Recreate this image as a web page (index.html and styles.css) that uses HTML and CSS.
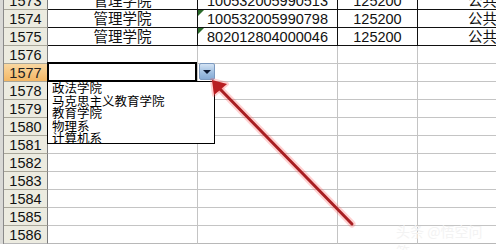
FILE: index.html
```html
<!DOCTYPE html>
<html>
<head>
<meta charset="utf-8">
<link rel="stylesheet" href="styles.css">
</head>
<body>
<div class="page">
  <div class="sheet">
    <div class="row data"><div class="edge"></div><div class="hdr">1573</div><div class="cell">管理学院</div><div class="cell flag">100532005990513</div><div class="cell">125200</div><div class="cell e">公共管理</div></div>
    <div class="row data"><div class="edge"></div><div class="hdr">1574</div><div class="cell">管理学院</div><div class="cell flag">100532005990798</div><div class="cell">125200</div><div class="cell e">公共管理</div></div>
    <div class="row data"><div class="edge"></div><div class="hdr">1575</div><div class="cell">管理学院</div><div class="cell flag">802012804000046</div><div class="cell">125200</div><div class="cell e">公共管理</div></div>
    <div class="row"><div class="edge"></div><div class="hdr">1576</div><div class="cell"></div><div class="cell"></div><div class="cell"></div><div class="cell e"></div></div>
    <div class="row"><div class="edge"></div><div class="hdr active">1577</div>
      <div class="cell current">
        <div class="dd-btn"><span class="tri"></span></div>
        <div class="dd-list">
          <div class="dd-item">政法学院</div>
          <div class="dd-item">马克思主义教育学院</div>
          <div class="dd-item">教育学院</div>
          <div class="dd-item">物理系</div>
          <div class="dd-item">计算机系</div>
        </div>
      </div>
      <div class="cell"></div><div class="cell"></div><div class="cell e"></div></div>
    <div class="row"><div class="edge"></div><div class="hdr">1578</div><div class="cell"></div><div class="cell"></div><div class="cell"></div><div class="cell e"></div></div>
    <div class="row"><div class="edge"></div><div class="hdr">1579</div><div class="cell"></div><div class="cell"></div><div class="cell"></div><div class="cell e"></div></div>
    <div class="row"><div class="edge"></div><div class="hdr">1580</div><div class="cell"></div><div class="cell"></div><div class="cell"></div><div class="cell e"></div></div>
    <div class="row"><div class="edge"></div><div class="hdr">1581</div><div class="cell"></div><div class="cell"></div><div class="cell"></div><div class="cell e"></div></div>
    <div class="row"><div class="edge"></div><div class="hdr">1582</div><div class="cell"></div><div class="cell"></div><div class="cell"></div><div class="cell e"></div></div>
    <div class="row"><div class="edge"></div><div class="hdr">1583</div><div class="cell"></div><div class="cell"></div><div class="cell"></div><div class="cell e"></div></div>
    <div class="row"><div class="edge"></div><div class="hdr">1584</div><div class="cell"></div><div class="cell"></div><div class="cell"></div><div class="cell e"></div></div>
    <div class="row"><div class="edge"></div><div class="hdr">1585</div><div class="cell"></div><div class="cell"></div><div class="cell"></div><div class="cell e"></div></div>
    <div class="row"><div class="edge"></div><div class="hdr">1586</div><div class="cell"></div><div class="cell"></div><div class="cell"></div><div class="cell e"></div></div>
  </div>
  <svg class="arrow" width="496" height="250" viewBox="0 0 496 250">
    <line x1="352" y1="224" x2="220" y2="89" stroke="rgba(255,90,90,0.28)" stroke-width="7" stroke-linecap="round"/>
    <polygon points="212,80 214,95 227,84" fill="rgba(255,90,90,0.28)" stroke="rgba(255,90,90,0.28)" stroke-width="4" stroke-linejoin="round"/>
    <line x1="352" y1="224" x2="220" y2="89" stroke="#a81f22" stroke-width="3" stroke-linecap="round"/>
    <polygon points="212,80 214,95 227,84" fill="#b81e22"/>
  </svg>
  <div class="watermark">头条 @悟空问答</div>
</div>
</body>
</html>
```
FILE: styles.css
```css
html, body {
  margin: 0;
  padding: 0;
  background: #ffffff;
}
.page {
  position: relative;
  width: 496px;
  height: 250px;
  overflow: hidden;
  background: #ffffff;
}
.sheet {
  display: flex;
  flex-direction: column;
  margin-top: -8px;
  font-family: "Liberation Sans", "Noto Sans CJK SC", sans-serif;
  font-size: 14.5px;
  color: #111;
}
.row {
  display: grid;
  grid-template-columns: 4px 44px 150px 140px 80px 1fr;
  height: 18px;
}
.row > div {
  box-sizing: border-box;
  height: 18px;
  line-height: 17px;
  white-space: nowrap;
  overflow: visible;
}
.edge {
  background: #d9d9d6;
  border-right: 1px solid #8a8a8a;
}
.hdr {
  background: #ecebe0;
  border-right: 1px solid #7c7c7c;
  border-bottom: 1px solid #a9a79a;
  text-align: center;
  padding-top: 1px;
  color: #111;
}
.hdr.active {
  background: linear-gradient(#f9d7a0, #f3b765);
  color: #222;
}
.cell {
  border-right: 1px solid #c4c4c4;
  border-bottom: 1px solid #c4c4c4;
  text-align: center;
  padding-top: 1px;
  position: relative;
}
.row:last-child .cell,
.row:last-child .hdr {
  border-bottom-color: #b8b8b8;
}
.data .cell {
  border-right-color: #111;
  border-bottom-color: #111;
}
.cell.e {
  text-align: left;
  padding-left: 50px;
  overflow: hidden;
  border-right: none;
}
.flag::before {
  content: "";
  position: absolute;
  left: 0;
  top: 0;
  width: 0;
  height: 0;
  border-top: 6px solid #2b6a2b;
  border-right: 6px solid transparent;
}
.current::after {
  content: "";
  position: absolute;
  left: -1px;
  top: -2px;
  right: 0;
  bottom: -1px;
  border: 2px solid #000;
  box-sizing: border-box;
}
.dd-btn {
  position: absolute;
  left: 151px;
  top: -1px;
  width: 16px;
  height: 17px;
  box-sizing: border-box;
  border: 1px solid #7c9ac0;
  border-radius: 2px;
  background: linear-gradient(#d3e3f4, #9dbde0 60%, #86aad4);
  display: flex;
  align-items: center;
  justify-content: center;
  z-index: 2;
}
.tri {
  width: 0;
  height: 0;
  border-left: 4px solid transparent;
  border-right: 4px solid transparent;
  border-top: 4px solid #0b1730;
  margin-top: 1px;
}
.dd-list {
  position: absolute;
  left: -1px;
  top: 17px;
  width: 168px;
  height: 63px;
  box-sizing: border-box;
  border: 1px solid #000;
  background: #fff;
  z-index: 2;
  padding-left: 4px;
  text-align: left;
  font-family: "Noto Sans CJK SC", sans-serif;
  font-size: 12.5px;
  color: #000;
}
.dd-item {
  height: 12.5px;
  line-height: 12.5px;
}
.arrow {
  position: absolute;
  left: 0;
  top: 0;
  z-index: 3;
}
.watermark {
  position: absolute;
  left: 396px;
  top: 221px;
  font-family: "Noto Sans CJK SC", sans-serif;
  font-size: 14px;
  color: #f3f3f3;
  z-index: 3;
}
```
